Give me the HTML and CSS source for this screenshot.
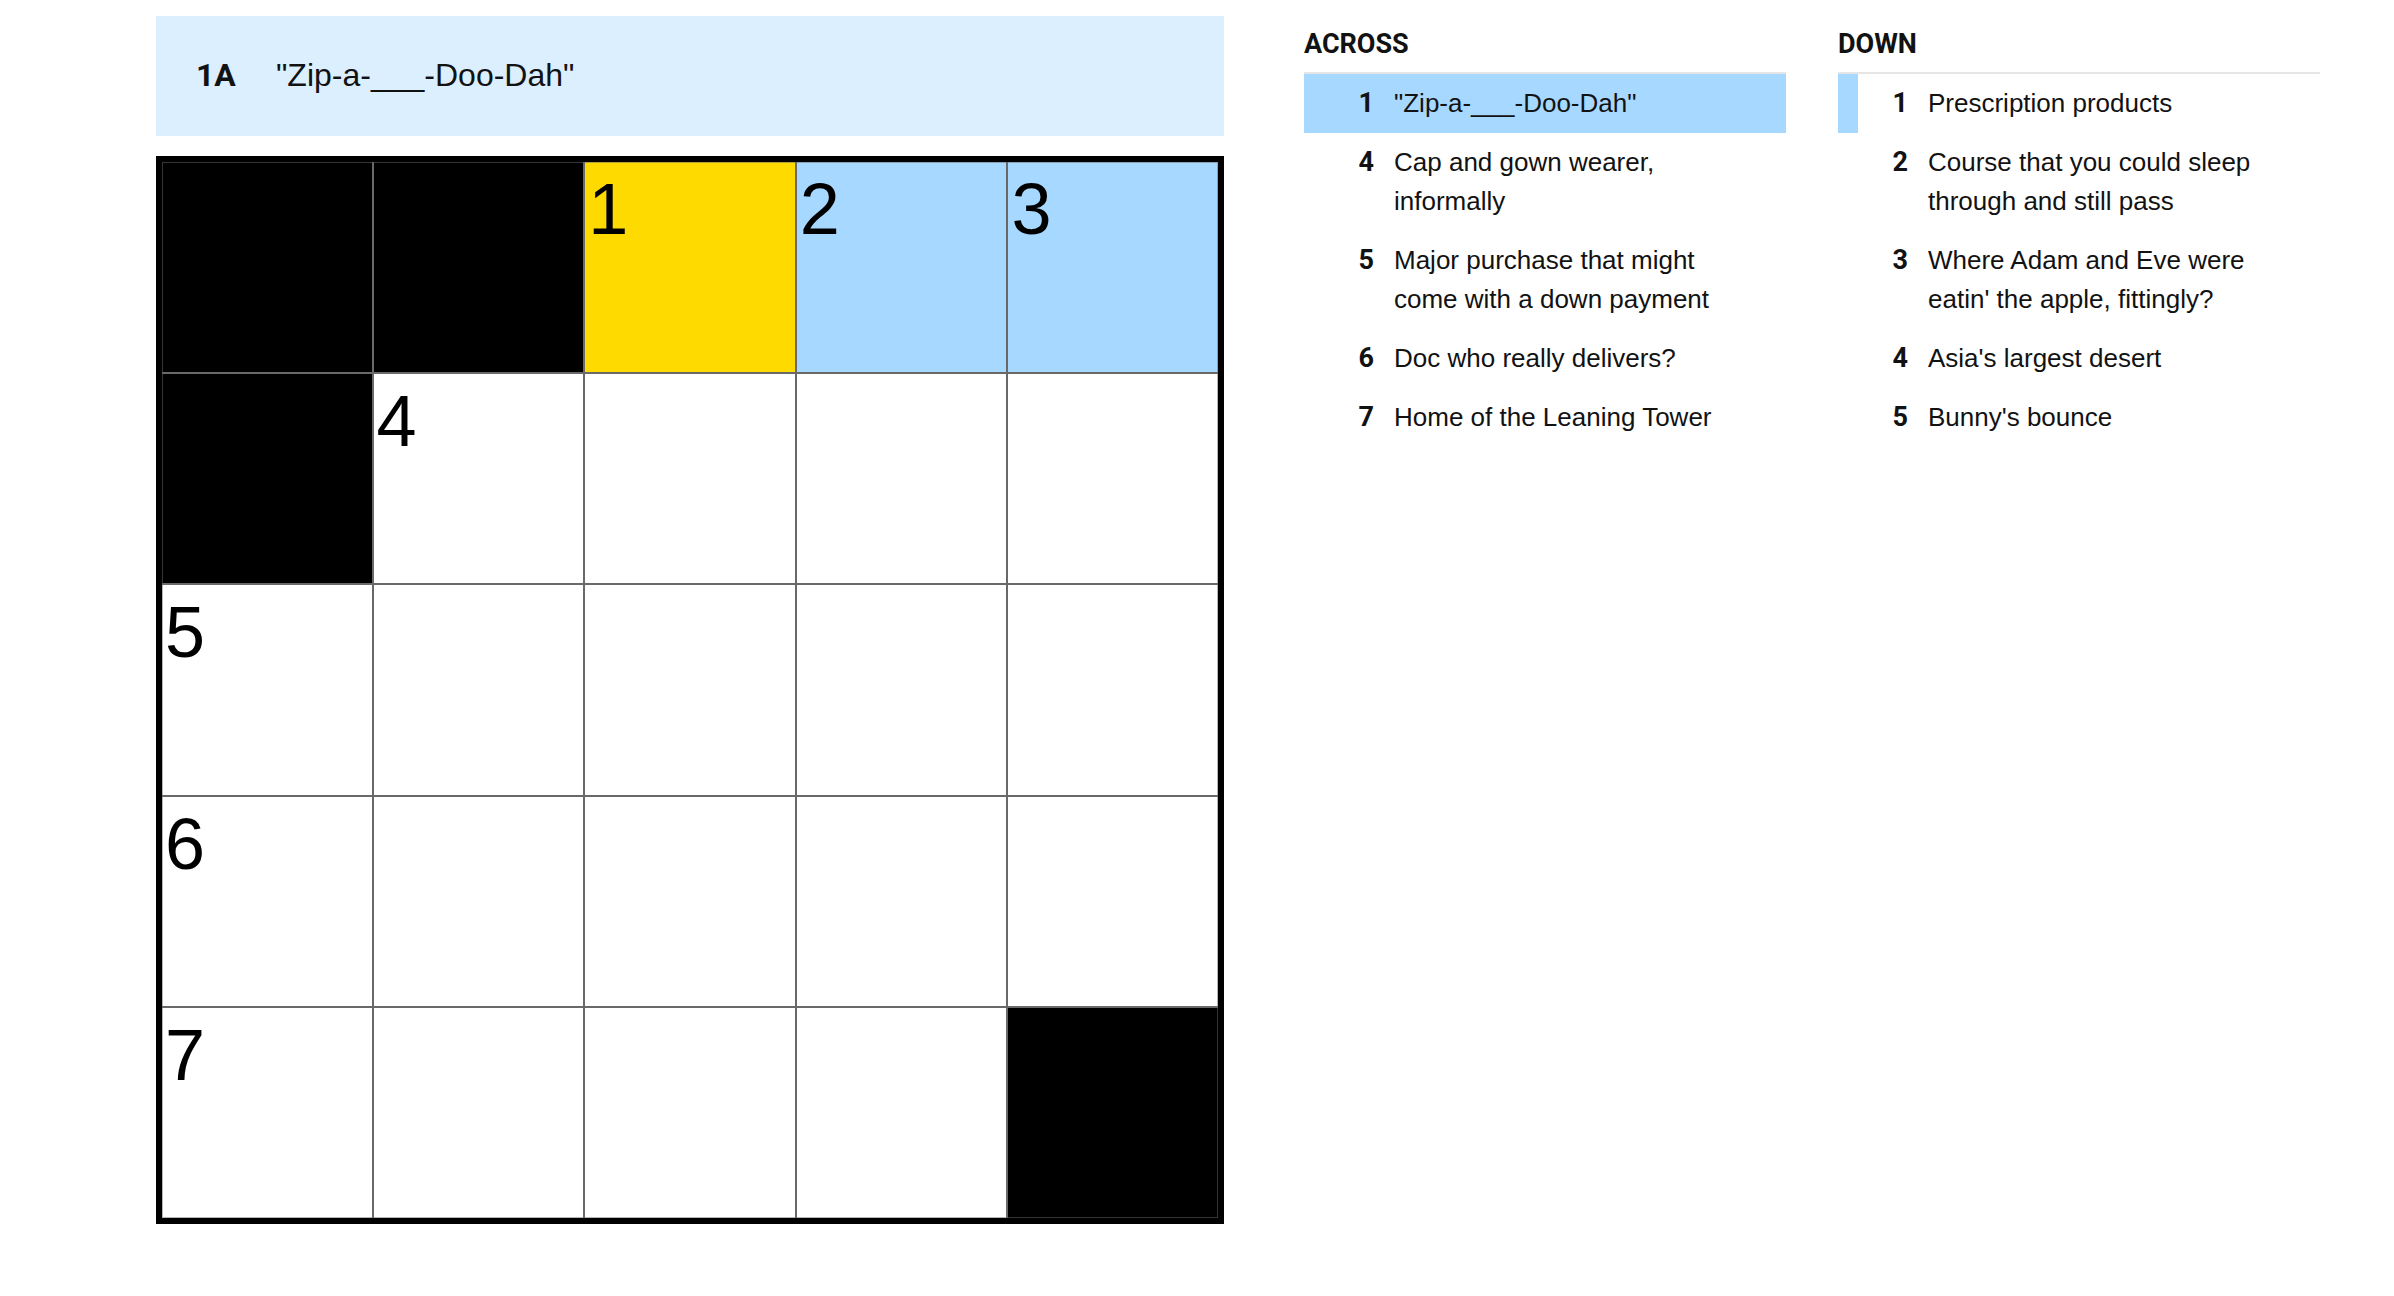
FILE: index.html
```html
<!doctype html>
<html lang="en">

<head>
  <meta charset="UTF-8" />
  <meta name="viewport" content="width=device-width, initial-scale=1.0" />
  <title>Mini Crossword</title>
  <link rel="stylesheet" href="styles.css">
</head>

<body>
  <main class="puzzle">
    <section class="play">
      <div class="clue-bar">
        <span class="clue-bar-number">1A</span>
        <span class="clue-bar-text">"Zip-a-___-Doo-Dah"</span>
      </div>

      <div class="board">
        <div class="cell block"></div>
        <div class="cell block"></div>
        <label class="cell selected"><span class="number">1</span><input type="text" maxlength="1"></label>
        <label class="cell highlighted"><span class="number">2</span><input type="text" maxlength="1"></label>
        <label class="cell highlighted"><span class="number">3</span><input type="text" maxlength="1"></label>

        <div class="cell block"></div>
        <label class="cell"><span class="number">4</span><input type="text" maxlength="1"></label>
        <label class="cell"><input type="text" maxlength="1" aria-label="Row 2, column 3"></label>
        <label class="cell"><input type="text" maxlength="1" aria-label="Row 2, column 4"></label>
        <label class="cell"><input type="text" maxlength="1" aria-label="Row 2, column 5"></label>

        <label class="cell"><span class="number">5</span><input type="text" maxlength="1"></label>
        <label class="cell"><input type="text" maxlength="1" aria-label="Row 3, column 2"></label>
        <label class="cell"><input type="text" maxlength="1" aria-label="Row 3, column 3"></label>
        <label class="cell"><input type="text" maxlength="1" aria-label="Row 3, column 4"></label>
        <label class="cell"><input type="text" maxlength="1" aria-label="Row 3, column 5"></label>

        <label class="cell"><span class="number">6</span><input type="text" maxlength="1"></label>
        <label class="cell"><input type="text" maxlength="1" aria-label="Row 4, column 2"></label>
        <label class="cell"><input type="text" maxlength="1" aria-label="Row 4, column 3"></label>
        <label class="cell"><input type="text" maxlength="1" aria-label="Row 4, column 4"></label>
        <label class="cell"><input type="text" maxlength="1" aria-label="Row 4, column 5"></label>

        <label class="cell"><span class="number">7</span><input type="text" maxlength="1"></label>
        <label class="cell"><input type="text" maxlength="1" aria-label="Row 5, column 2"></label>
        <label class="cell"><input type="text" maxlength="1" aria-label="Row 5, column 3"></label>
        <label class="cell"><input type="text" maxlength="1" aria-label="Row 5, column 4"></label>
        <div class="cell block"></div>
      </div>
    </section>

    <section class="clues">
      <div class="clue-list">
        <h3>Across</h3>
        <ol>
          <li class="clue active"><span class="label">1</span><span class="text">"Zip-a-___-Doo-Dah"</span></li>
          <li class="clue"><span class="label">4</span><span class="text">Cap and gown wearer, informally</span></li>
          <li class="clue"><span class="label">5</span><span class="text">Major purchase that might come with a down payment</span></li>
          <li class="clue"><span class="label">6</span><span class="text">Doc who really delivers?</span></li>
          <li class="clue"><span class="label">7</span><span class="text">Home of the Leaning Tower</span></li>
        </ol>
      </div>

      <div class="clue-list">
        <h3>Down</h3>
        <ol>
          <li class="clue crossing"><span class="label">1</span><span class="text">Prescription products</span></li>
          <li class="clue"><span class="label">2</span><span class="text">Course that you could sleep through and still pass</span></li>
          <li class="clue"><span class="label">3</span><span class="text">Where Adam and Eve were eatin' the apple, fittingly?</span></li>
          <li class="clue"><span class="label">4</span><span class="text">Asia's largest desert</span></li>
          <li class="clue"><span class="label">5</span><span class="text">Bunny's bounce</span></li>
        </ol>
      </div>
    </section>
  </main>
</body>

</html>
```
FILE: styles.css
```css
* {
  margin: 0;
  padding: 0;
  box-sizing: border-box;
}

body {
  background: #fff;
  color: #121212;
  font-family: "Liberation Sans", Arial, sans-serif;
  font-size: 26px;
  line-height: 39px;
}

.puzzle {
  display: grid;
  grid-template-columns: 1068fr 1016fr;
  gap: 80px;
  padding: 16px 74px 72px 156px;
}

.play {
  display: flex;
  flex-direction: column;
  gap: 20px;
}

/* current clue */
.clue-bar {
  display: flex;
  align-items: center;
  min-height: 120px;
  padding: 0 40px 2px;
  background: #dcefff;
  font-size: 32px;
}

.clue-bar-number {
  width: 80px;
  font-family: Roboto, sans-serif;
  font-weight: 700;
}

.clue-bar-text {
  flex: 1;
}

/* grid */
.board {
  position: relative;
  display: grid;
  grid-template-columns: repeat(5, minmax(0, 1fr));
  grid-template-rows: repeat(5, minmax(0, 1fr));
  gap: 2px;
  aspect-ratio: 1;
  border: 6px solid #000;
  background: #696969;
}

.board::after {
  content: "";
  position: absolute;
  inset: 0;
  border: 1px solid rgba(105, 105, 105, 0.5);
  pointer-events: none;
}

.cell {
  display: flex;
  flex-direction: column;
  padding: 11px 3px;
  background: #fff;
}

.cell.block {
  background: #000;
}

.cell.selected {
  background: #ffda00;
}

.cell.highlighted {
  background: #a7d8ff;
}

.number {
  color: #000;
  font-size: 72px;
  line-height: 72px;
}

.cell input {
  flex: 1;
  width: 100%;
  min-height: 0;
  border: none;
  outline: none;
  background: transparent;
  font-family: inherit;
  font-size: 72px;
  text-align: center;
  text-transform: uppercase;
}

/* clue lists */
.clues {
  display: grid;
  grid-template-columns: 1fr 1fr;
  gap: 52px;
  align-items: start;
}

.clue-list h3 {
  padding: 9px 0 8px;
  border-bottom: 2px solid #e6e6e6;
  font-family: Roboto, sans-serif;
  font-size: 27px;
  font-weight: 700;
  text-transform: uppercase;
}

.clue-list ol {
  list-style: none;
}

.clue {
  display: flex;
  gap: 20px;
  padding: 10px 30px 10px 0;
  border-left: 20px solid transparent;
}

.clue.active {
  border-color: #a7d8ff;
  background: #a7d8ff;
}

.clue.crossing {
  border-color: #a7d8ff;
}

.label {
  width: 50px;
  font-family: Roboto, sans-serif;
  font-size: 27px;
  font-weight: 700;
  text-align: right;
}

.text {
  flex: 1;
}
```
